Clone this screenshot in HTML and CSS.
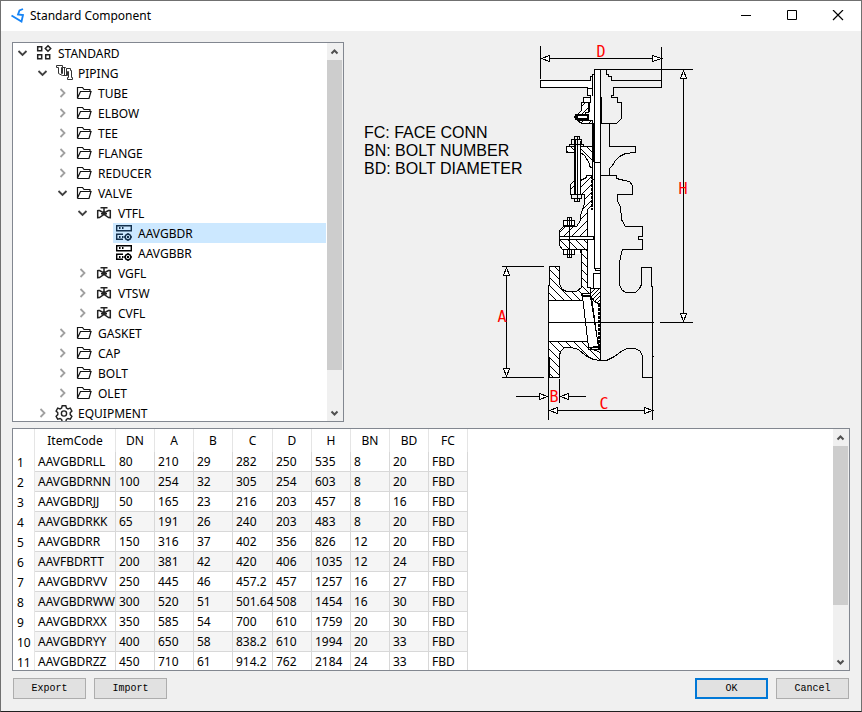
FILE: index.html
```html
<!DOCTYPE html>
<html lang="en">
<head>
<meta charset="utf-8">
<title>Standard Component</title>
<link rel="stylesheet" href="styles.css">
</head>
<body>
<svg class="defs" aria-hidden="true">
  <symbol id="open" viewBox="0 0 20 20"><path d="M5.500 8l4 4 4-4" fill="none" stroke="#404040" stroke-width="1.8"/></symbol>
  <symbol id="closed" viewBox="0 0 20 20"><path d="M7.500 6l4 4-4 4" fill="none" stroke="#a0a0a0" stroke-width="1.8"/></symbol>
  <symbol id="grid" viewBox="0 0 20 20"><g fill="none" stroke="#222" stroke-width="1.5"><path d="M4.7 3.7h4v4h-4zM4.7 11.7h4v4h-4zM12.7 11.7h4v4h-4z"/><path d="M15 2.8l2.7 2.7L15 8.200l-2.700-2.700z"/></g></symbol>
  <symbol id="pipe" viewBox="0 0 20 20"><path d="M3.500 2.500h6v2h-1v6h1v-6h3l1 1h4v2h1v7h1v2h-5v-2h1v-6h-1v4h-5l-4-2v-6h-2zM11.500 4.500v8M13.500 5.500v7" fill="none" stroke="#333" stroke-width="1"/></symbol>
  <symbol id="folder" viewBox="0 0 20 20"><path d="M4.500 15.500v-11h5l1.500 2h6v2M4.500 15.500h11.500l2-7H7.500l-3 6.500" fill="none" stroke="#111" stroke-width="1.2"/></symbol>
  <symbol id="valve" viewBox="0 0 20 20"><path d="M7.500 4.700h7M11 5v4M4.700 7v8.500M17.300 7v8.500M4.700 7.500h1.800L11 10l4.500-2.500h1.800M4.700 14.500h1.800L11 11.500l4.500 3h1.800M8 10.700h6" fill="none" stroke="#222" stroke-width="1.500"/></symbol>
  <symbol id="server" viewBox="0 0 20 20"><g fill="none" stroke="currentColor" stroke-width="1.400"><path d="M3.700 2.700h14.600v5H3.700zM10 16.300H3.700v-5H10"/><circle cx="15" cy="14" r="2.800"/></g><path d="M6 4h1.500v2H6zM9 4h1.500v2H9zM6 13h1.500v2H6zM9 13h1.500v2H9zM14 13h2v2h-2zM14.300 10h1.400v1.500h-1.400zM14.300 16.500h1.400V18h-1.400zM11 13.300h1.500v1.400H11zM17.500 13.300H19v1.400h-1.500z" fill="currentColor"/></symbol>
  <symbol id="gear" viewBox="0 0 20 20"><g fill="none" stroke="#222" stroke-width="1.400"><path d="M9.200 2.700h3.600l.6 2.300 1.600.9 2.300-.7 1.600 2.900-1.700 1.700v1.800l1.700 1.700-1.600 2.900-2.300-.7-1.600.9-.6 2.300H9.200l-.6-2.300-1.600-.9-2.300.7-1.600-2.900 1.700-1.700V9.800L3.100 8.100l1.600-2.900 2.300.7 1.600-.9z"/><circle cx="11" cy="10.500" r="2.600"/></g></symbol>
  <symbol id="up" viewBox="0 0 16 16"><path d="M4.500 10l3-3 3 3" fill="none" stroke="#505050" stroke-width="2"/></symbol>
  <symbol id="down" viewBox="0 0 16 16"><path d="M4.500 7l3 3 3-3" fill="none" stroke="#505050" stroke-width="2"/></symbol>
</svg>

<div class="window">
  <header class="titlebar">
    <svg class="logo" viewBox="0 0 16 16"><path d="M13 1L9.500 2.500 8 6.500l5 .5-1.500 6.500L1.500 7.500" fill="none" stroke="#1583f5" stroke-width="1.800"/></svg>
    <h1>Standard Component</h1>
    <button class="win" aria-label="Minimize"><svg viewBox="0 0 12 12"><path d="M1 5.500h10" stroke="#000"/></svg></button>
    <button class="win" aria-label="Maximize"><svg viewBox="0 0 12 12"><path d="M1.500 .5h9v9h-9z" fill="none" stroke="#000"/></svg></button>
    <button class="win" aria-label="Close"><svg viewBox="0 0 12 12"><path d="M1 0l10 10M11 0L1 10" stroke="#000" stroke-width="1.200"/></svg></button>
  </header>

  <main class="content">
    <div class="upper">
      <section class="frame tree">
        <div class="view">
          <ul>
            <li><div class="row"><svg><use href="#open"/></svg><span><svg><use href="#grid"/></svg>STANDARD</span></div>
              <ul>
                <li><div class="row"><svg><use href="#open"/></svg><span><svg><use href="#pipe"/></svg>PIPING</span></div>
                  <ul>
                    <li><div class="row"><svg><use href="#closed"/></svg><span><svg><use href="#folder"/></svg>TUBE</span></div></li>
                    <li><div class="row"><svg><use href="#closed"/></svg><span><svg><use href="#folder"/></svg>ELBOW</span></div></li>
                    <li><div class="row"><svg><use href="#closed"/></svg><span><svg><use href="#folder"/></svg>TEE</span></div></li>
                    <li><div class="row"><svg><use href="#closed"/></svg><span><svg><use href="#folder"/></svg>FLANGE</span></div></li>
                    <li><div class="row"><svg><use href="#closed"/></svg><span><svg><use href="#folder"/></svg>REDUCER</span></div></li>
                    <li><div class="row"><svg><use href="#open"/></svg><span><svg><use href="#folder"/></svg>VALVE</span></div>
                      <ul>
                        <li><div class="row"><svg><use href="#open"/></svg><span><svg><use href="#valve"/></svg>VTFL</span></div>
                          <ul>
                            <li><div class="row selected"><svg></svg><span><svg><use href="#server"/></svg>AAVGBDR</span></div></li>
                            <li><div class="row"><svg></svg><span><svg><use href="#server"/></svg>AAVGBBR</span></div></li>
                          </ul>
                        </li>
                        <li><div class="row"><svg><use href="#closed"/></svg><span><svg><use href="#valve"/></svg>VGFL</span></div></li>
                        <li><div class="row"><svg><use href="#closed"/></svg><span><svg><use href="#valve"/></svg>VTSW</span></div></li>
                        <li><div class="row"><svg><use href="#closed"/></svg><span><svg><use href="#valve"/></svg>CVFL</span></div></li>
                      </ul>
                    </li>
                    <li><div class="row"><svg><use href="#closed"/></svg><span><svg><use href="#folder"/></svg>GASKET</span></div></li>
                    <li><div class="row"><svg><use href="#closed"/></svg><span><svg><use href="#folder"/></svg>CAP</span></div></li>
                    <li><div class="row"><svg><use href="#closed"/></svg><span><svg><use href="#folder"/></svg>BOLT</span></div></li>
                    <li><div class="row"><svg><use href="#closed"/></svg><span><svg><use href="#folder"/></svg>OLET</span></div></li>
                  </ul>
                </li>
                <li><div class="row"><svg><use href="#closed"/></svg><span><svg><use href="#gear"/></svg>EQUIPMENT</span></div></li>
              </ul>
            </li>
          </ul>
        </div>
        <div class="scrollbar">
          <svg><use href="#up"/></svg>
          <div class="track"><div class="thumb tree-thumb"></div></div>
          <svg><use href="#down"/></svg>
        </div>
      </section>

      <section class="preview">
        <svg viewBox="350 42 350 380" role="img" aria-label="Gate valve dimensions">
          <defs>
            <pattern id="hatch" width="8" height="8" patternUnits="userSpaceOnUse"><path fill="#fff" stroke="none" d="M0 0h8v8H0z"/><path d="M-1-1l10 10M-1 7l2 2M7-1l2 2" stroke="#000"/></pattern>
            <pattern id="hatch2" width="8" height="8" patternUnits="userSpaceOnUse"><path fill="#fff" stroke="none" d="M0 0h8v8H0z"/><path d="M-1 9L9-1M-1 1l2-2M7 9l2-2" stroke="#000"/></pattern>
            <pattern id="fine" width="4" height="4" patternUnits="userSpaceOnUse"><path fill="#fff" stroke="none" d="M0 0h4v4H0z"/><path d="M-1 5l6-6M-1 1l2-2M3 5l2-2" stroke="#000"/></pattern>
          </defs>
          <g class="legend">
            <text x="364" y="138">FC: FACE CONN</text>
            <text x="364" y="156">BN: BOLT NUMBER</text>
            <text x="364" y="174">BD: BOLT DIAMETER</text>
          </g>
          <g class="ink">
            <!-- handwheel and yoke nut -->
            <path class="solid" d="M600.500 69.500h-6v5h-2v2h-2v4h-50v7h47v8h3v2h-7v5h-2v9l-4 5v3l4 4h20z"/>
            <path d="M594.500 69.500h12v5h2v2h3v4h50v7h-48v8h-2v2h6v5h4v16l-5 5h-36"/>
            <path fill="url(#hatch2)" d="M581.500 102.500h7v10h-3v3h-9l5-5zM577.500 120.500h15v3h-11z"/>
            <path d="M587.500 95.500v-7h5M592.500 76.500v19M590.500 95.500v7M583.500 102.500h7"/>
            <path class="solid" stroke-width="2" d="M577 115h11v4h-11zM577 114l-2 3 2 3"/>
            <path stroke-width="2" d="M589 102v10"/>
            <!-- gland -->
            <path class="solid" d="M600.500 123.500h-8v23h-26v6h8v29l-4 4v9h14v10l-4 16-5 6h-12l-4 4v20l3 3h18l2 7v30h16z" stroke="none"/>
            <path fill="url(#hatch)" d="M580.500 146.500h12v22l-3-2v-3l-5-8-4-3zM566.500 146.500h8v6h-8z"/>
            <path d="M592.500 123.500v52M569.500 146.500v-2h14v2M571.500 139.500h10v5h-10zM574.500 136.500h5v3h-5z"/>
            <path stroke-width="2" d="M575 139v56M594 124v38"/><path d="M577.500 136.500v64M580.500 140.500v54"/>
            <path d="M609.500 123.500v23h26v6l-10 1-6 3-4 4-3 5-3 3v7M595.500 175.500h21v3l8 2 5 1 3 4v9h-15v7l3 5 1 13 4 7h17v10h-4v3h4v10h-20l-2 7-1 8v20l2 5 4 3h10l4-4 2-4v-17h10v19h1v133"/>
            <!-- bonnet -->
            <path fill="url(#hatch2)" d="M592.500 175.500h-6v2l-6 3v14h4v9l-4 12v5l-4 6h-13l-4 4v7h28v-28l5-5z"/>
            <path fill="url(#hatch2)" d="M574.500 180.500l-4 4v10h4z"/>
            <path d="M571.500 194.500h10v4h-10zM574.500 198.500h5v3h-5zM588.500 208.500l4-4v-25h2M594.500 170v12"/>
            <path stroke-dasharray="3 1" stroke-width="2" d="M592 176v34"/>
            <path fill="url(#hatch)" d="M593.500 239.500h-34v6l3 4h18l1 7v29h6v-46z"/>
            <path class="solid" d="M559.500 236.500h34v3h-34z"/>
            <path class="solid" d="M563.500 220.500h11v5h-11zM567.500 217.500h4v8h-4zM563.500 249.500h11v5h-11zM567.500 249.500h4v8h-4z"/>
            <path d="M569.500 217v40"/>
            <!-- body -->
            <path class="solid" d="M548.500 300h52v42h-52z" stroke="none"/>
            <path fill="url(#hatch)" d="M549.500 266.500h10v18l3 5 4 2h10l5-4v-38h6v38h3v8h-8v5h-34v-15h1z"/>
            <path fill="url(#hatch)" d="M548.500 341.500h40v6l12 5v8l-7-1-8-4-7-6-7-2h-7l-4 4-1 4v22h-10v-20h-1z"/>
            <path d="M600.500 360.500h6l8-4 8-6 5-2h8l5 3 2 5v21h10v-21h1"/>
            <path class="solid" d="M582.500 296.500h8l8 50-10 1z"/>
            <path d="M581.500 295.500v-2h8M591.500 297.500l7 50M588.500 347.500v2h12M588.500 347.500h12"/>
            <path fill="url(#fine)" d="M590.500 288.500h10v16l-6-3-4-5z"/>
            <path stroke-width="2" stroke-dasharray="3 1" d="M599 304v46"/>
            <path class="solid" d="M594.500 69.500h6v199h-6zM593.500 273.500h7v15h-7zM595.500 268.500h5v2h-5z"/>
            <path d="M594.500 162.500h6M600.500 69v291M548.500 285v135M548.500 322.500h105M660 322.500h33"/>
            <!-- dimension lines -->
            <path d="M540.500 46v33M661.500 47v35M541 58.500h120M600 69.500h93M683.500 70v252M502 266.500h42M502 377.500h42M506.500 267v110M516 396.500h31M560 396.500h26M559.500 379v24M549 410.500h104"/>
            <path class="arrow" d="M541.500 58.500l8-3v6zM661.500 58.500l-9-3v6zM683.500 70.500l-3 8h6zM683.500 321.500l-3-8h6zM506.500 267.500l-3 8h6zM506.500 376.500l-3-8h6zM547.500 396.500l-8-3v6zM560.500 396.500l8-3v6zM549.500 410.500l8-3v6zM652.500 410.500l-8-3v6z"/>
          </g>
          <g class="dims">
            <text x="601" y="57">D</text><text x="683" y="194">H</text><text x="502" y="322">A</text><text x="554" y="402">B</text><text x="604" y="409">C</text>
          </g>
        </svg>
      </section>
    </div>

    <section class="frame data">
      <div class="view">
        <table>
          <colgroup><col class="c-num"><col class="c-code"><col><col><col><col class="c-wide"><col><col><col><col><col></colgroup>
          <thead><tr><th></th><th>ItemCode</th><th>DN</th><th>A</th><th>B</th><th>C</th><th>D</th><th>H</th><th>BN</th><th>BD</th><th>FC</th></tr></thead>
          <tbody>
            <tr><th>1</th><td>AAVGBDRLL</td><td>80</td><td>210</td><td>29</td><td>282</td><td>250</td><td>535</td><td>8</td><td>20</td><td>FBD</td></tr>
            <tr><th>2</th><td>AAVGBDRNN</td><td>100</td><td>254</td><td>32</td><td>305</td><td>254</td><td>603</td><td>8</td><td>20</td><td>FBD</td></tr>
            <tr><th>3</th><td>AAVGBDRJJ</td><td>50</td><td>165</td><td>23</td><td>216</td><td>203</td><td>457</td><td>8</td><td>16</td><td>FBD</td></tr>
            <tr><th>4</th><td>AAVGBDRKK</td><td>65</td><td>191</td><td>26</td><td>240</td><td>203</td><td>483</td><td>8</td><td>20</td><td>FBD</td></tr>
            <tr><th>5</th><td>AAVGBDRR</td><td>150</td><td>316</td><td>37</td><td>402</td><td>356</td><td>826</td><td>12</td><td>20</td><td>FBD</td></tr>
            <tr><th>6</th><td>AAVFBDRTT</td><td>200</td><td>381</td><td>42</td><td>420</td><td>406</td><td>1035</td><td>12</td><td>24</td><td>FBD</td></tr>
            <tr><th>7</th><td>AAVGBDRVV</td><td>250</td><td>445</td><td>46</td><td>457.2</td><td>457</td><td>1257</td><td>16</td><td>27</td><td>FBD</td></tr>
            <tr><th>8</th><td>AAVGBDRWW</td><td>300</td><td>520</td><td>51</td><td>501.64</td><td>508</td><td>1454</td><td>16</td><td>30</td><td>FBD</td></tr>
            <tr><th>9</th><td>AAVGBDRXX</td><td>350</td><td>585</td><td>54</td><td>700</td><td>610</td><td>1759</td><td>20</td><td>30</td><td>FBD</td></tr>
            <tr><th>10</th><td>AAVGBDRYY</td><td>400</td><td>650</td><td>58</td><td>838.2</td><td>610</td><td>1994</td><td>20</td><td>33</td><td>FBD</td></tr>
            <tr><th>11</th><td>AAVGBDRZZ</td><td>450</td><td>710</td><td>61</td><td>914.2</td><td>762</td><td>2184</td><td>24</td><td>33</td><td>FBD</td></tr>
          </tbody>
        </table>
      </div>
      <div class="scrollbar">
        <svg><use href="#up"/></svg>
        <div class="track"><div class="thumb data-thumb"></div></div>
        <svg><use href="#down"/></svg>
      </div>
    </section>

    <footer class="actions">
      <button class="push">Export</button>
      <button class="push">Import</button>
      <span class="spacer"></span>
      <button class="push default">OK</button>
      <button class="push">Cancel</button>
    </footer>
  </main>
</div>
</body>
</html>
```
FILE: styles.css
```css
* { box-sizing: border-box; }

body {
  margin: 0;
  color: #000;
  font: 12px/20px "Noto Sans", "Open Sans", sans-serif;
}

svg { display: block; }
.defs { position: absolute; width: 0; height: 0; }

.window {
  display: flex;
  flex-direction: column;
  height: 100vh;
  background: #f0f0f0;
  border: 1px solid #707070;
  border-bottom-color: #202020;
}

.titlebar {
  display: flex;
  align-items: center;
  height: 30px;
  flex: none;
  padding-left: 9px;
  background: #fff;
}
.titlebar h1 { flex: 1; margin: 0 0 0 4px; font-size: 12px; font-weight: 400; }
.logo { width: 16px; height: 16px; }
.win {
  display: grid;
  place-items: center;
  width: 46px;
  height: 30px;
  padding: 0;
  border: 0;
  background: none;
}
.win svg { width: 12px; height: 12px; }

.content {
  display: grid;
  grid-template-rows: minmax(0, 380fr) minmax(0, 243fr) auto;
  row-gap: 6px;
  flex: 1;
  min-height: 0;
  padding: 11px 11px 12px;
}

.upper { display: flex; gap: 6px; min-height: 0; }

.frame {
  display: flex;
  min-width: 0;
  min-height: 0;
  background: #fff;
  border: 1px solid #828790;
}
.view { flex: 1; min-width: 0; overflow: hidden; }

.scrollbar {
  display: flex;
  flex-direction: column;
  width: 16px;
  flex: none;
  background: #f0f0f0;
}
.scrollbar svg { width: 16px; height: 17px; }
.track { flex: 1; }
.thumb { margin-right: 1px; background: #cdcdcd; }
.tree-thumb { height: 90%; }
.data-thumb { height: 77%; }

.tree { flex: 0 0 332px; }
.tree ul { margin: 0; padding: 0; list-style: none; }
.tree ul ul { padding-left: 20px; }
.tree .view { padding-right: 1px; }
.row { display: flex; height: 20px; line-height: 22px; }
.row svg { width: 20px; height: 20px; flex: none; }
.row span { display: flex; flex: 1; gap: 5px; }
.selected span { background: #cce8ff; }
.selected span svg { color: #14304c; }

.preview { flex: 1; min-width: 0; overflow: hidden; }
.preview svg { width: 350px; height: 380px; }
.legend { font: 16px "Liberation Sans", sans-serif; }
.dims { fill: #f00; font: 15px "Liberation Sans Narrow", "DejaVu Sans Mono", monospace; text-anchor: middle; }
.ink { fill: none; stroke: #000; shape-rendering: crispEdges; }
.solid, .arrow { fill: #fff; }

table { width: 455px; border-spacing: 0; table-layout: fixed; }
col { width: 39px; }
.c-num { width: 22px; }
.c-code { width: 81px; }
.c-wide { width: 40px; }
th, td {
  height: 20px;
  padding: 0 0 0 3px;
  border-right: 1px solid #d8d8d8;
  font-weight: 400;
  line-height: 19px;
  text-align: left;
  white-space: nowrap;
}
td { border-bottom: 1px solid #d8d8d8; }
thead th { height: 23px; padding: 0; border-color: #e5e5e5; text-align: center; }
tbody th { padding-left: 4px; border-color: #e5e5e5; }
tbody tr:nth-child(even) td { background: #f5f5f5; }

.actions { display: flex; gap: 8px; padding: 1px 1px 0; }
.spacer { flex: 1; }
.push {
  width: 73px;
  height: 21px;
  padding: 0;
  background: #e1e1e1;
  border: 1px solid #adadad;
  color: #000;
  font: 10px "Liberation Mono", monospace;
}
.default { border: 2px solid #0078d7; }
```
